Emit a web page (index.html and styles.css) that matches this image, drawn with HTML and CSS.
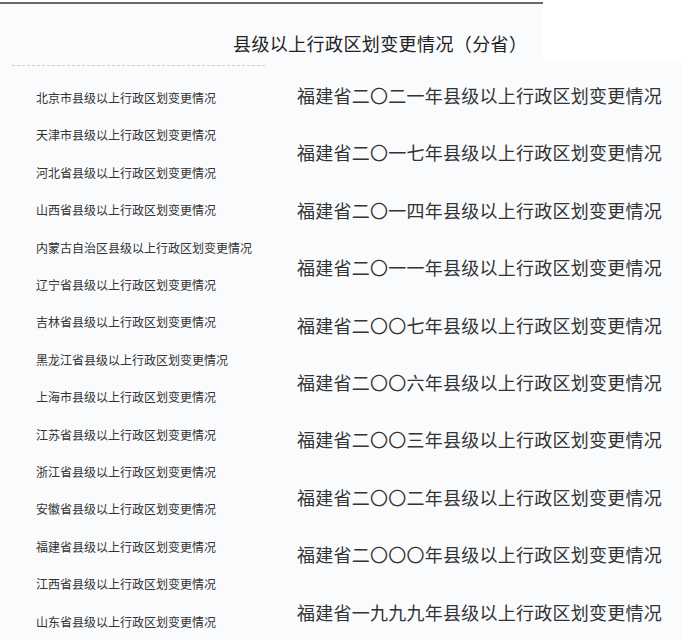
FILE: index.html
```html
<!doctype html>
<html lang="zh-CN">
	<head>
		<meta charset="UTF-8" />
		<title>县级以上行政区划变更情况（分省）</title>
		<link rel="stylesheet" href="styles.css">
	</head>
	<body>
		<div class="header">
			<h1 class="title">县级以上行政区划变更情况（分省）</h1>
		</div>
		<div class="main">
			<ul class="side">
				<li>北京市县级以上行政区划变更情况</li>
				<li>天津市县级以上行政区划变更情况</li>
				<li>河北省县级以上行政区划变更情况</li>
				<li>山西省县级以上行政区划变更情况</li>
				<li>内蒙古自治区县级以上行政区划变更情况</li>
				<li>辽宁省县级以上行政区划变更情况</li>
				<li>吉林省县级以上行政区划变更情况</li>
				<li>黑龙江省县级以上行政区划变更情况</li>
				<li>上海市县级以上行政区划变更情况</li>
				<li>江苏省县级以上行政区划变更情况</li>
				<li>浙江省县级以上行政区划变更情况</li>
				<li>安徽省县级以上行政区划变更情况</li>
				<li>福建省县级以上行政区划变更情况</li>
				<li>江西省县级以上行政区划变更情况</li>
				<li>山东省县级以上行政区划变更情况</li>
			</ul>
			<ul class="content">
				<li>福建省二〇二一年县级以上行政区划变更情况</li>
				<li>福建省二〇一七年县级以上行政区划变更情况</li>
				<li>福建省二〇一四年县级以上行政区划变更情况</li>
				<li>福建省二〇一一年县级以上行政区划变更情况</li>
				<li>福建省二〇〇七年县级以上行政区划变更情况</li>
				<li>福建省二〇〇六年县级以上行政区划变更情况</li>
				<li>福建省二〇〇三年县级以上行政区划变更情况</li>
				<li>福建省二〇〇二年县级以上行政区划变更情况</li>
				<li>福建省二〇〇〇年县级以上行政区划变更情况</li>
				<li>福建省一九九九年县级以上行政区划变更情况</li>
			</ul>
		</div>
	</body>
</html>
```
FILE: styles.css
```css
* {
	margin: 0;
	padding: 0;
	box-sizing: border-box;
}
body {
	background: #fff;
	font-family: "Noto Sans CJK SC", "Noto Sans", sans-serif;
	color: #333;
}
ul {
	list-style: none;
}
.header {
	width: 543px;
	height: 58px;
	margin-top: 2px;
	border-top: 2px solid #6b6b6b;
	background: #fafbfd;
}
.title {
	padding: 27px 0 0 233px;
	font-size: 18px;
	font-weight: normal;
	line-height: 24px;
	letter-spacing: 0.4px;
	color: #222;
}
.main {
	display: flex;
	align-items: flex-start;
	padding-top: 5px;
	background: #fafbfd;
	min-height: 580px;
}
.side {
	width: 253px;
	margin-left: 12px;
	padding: 13px 0 0 24px;
	border-top: 1px dashed #ccc;
}
.side li {
	font-size: 12px;
	line-height: 37.4px;
	white-space: nowrap;
}
.content {
	flex: 1;
	padding: 2px 0 0 32px;
}
.content li {
	font-size: 18px;
	line-height: 57.4px;
	letter-spacing: 0.25px;
	white-space: nowrap;
}
```
